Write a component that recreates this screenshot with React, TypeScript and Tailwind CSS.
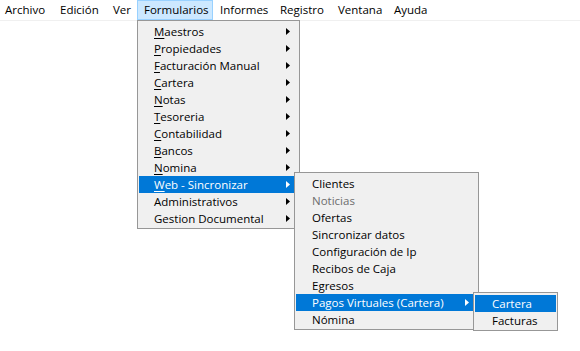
import React from 'react';

type Item = { label: string; mn?: boolean; sub?: boolean; active?: boolean; disabled?: boolean };

const barItems = [
    { label: 'Archivo', w: 'w-[54px]', pl: 'pl-[5px]' },
    { label: 'Edición', w: 'w-[53px]', pl: 'pl-[6px]' },
    { label: 'Ver', w: 'w-[30px]', pl: 'pl-[6px]' },
    { label: 'Formularios', w: 'w-[76px]', pl: 'pl-[6px]', open: true },
    { label: 'Informes', w: 'w-[61px]', pl: 'pl-[7px]' },
    { label: 'Registro', w: 'w-[58px]', pl: 'pl-[6px]' },
    { label: 'Ventana', w: 'w-[56px]', pl: 'pl-[6px]' },
    { label: 'Ayuda', w: 'w-[50px]', pl: 'pl-[6px]' },
];

const mainMenu: Item[] = [
    { label: 'Maestros', mn: true, sub: true },
    { label: 'Propiedades', mn: true, sub: true },
    { label: 'Facturación Manual', mn: true, sub: true },
    { label: 'Cartera', mn: true, sub: true },
    { label: 'Notas', mn: true, sub: true },
    { label: 'Tesoreria', mn: true, sub: true },
    { label: 'Contabilidad', mn: true, sub: true },
    { label: 'Bancos', mn: true, sub: true },
    { label: 'Nomina', mn: true, sub: true },
    { label: 'Web - Sincronizar', mn: true, sub: true, active: true },
    { label: 'Administrativos', sub: true },
    { label: 'Gestion Documental', sub: true },
];

const webMenu: Item[] = [
    { label: 'Clientes' },
    { label: 'Noticias', disabled: true },
    { label: 'Ofertas' },
    { label: 'Sincronizar datos' },
    { label: 'Configuración de Ip' },
    { label: 'Recibos de Caja' },
    { label: 'Egresos' },
    { label: 'Pagos Virtuales (Cartera)', sub: true, active: true },
    { label: 'Nómina' },
];

const pagosMenu: Item[] = [
    { label: 'Cartera', active: true },
    { label: 'Facturas' },
];

function Arrow({ white }: { white?: boolean }) {
    return (
        <svg width="4" height="7" viewBox="0 0 4 7" className="shrink-0">
            <polygon points="0,0 4,3.5 0,7" fill={white ? '#ffffff' : '#000000'} />
        </svg>
    );
}

function MenuRow({ item, textPl }: { item: Item; textPl: string }) {
    const color = item.active ? 'bg-[#0078d7] text-white' : item.disabled ? 'text-[#6d6d6d]' : 'text-black';
    return (
        <div className={`flex items-center h-[17px] pr-[8px] ${textPl} ${color}`}>
            <span className="flex-1 whitespace-nowrap leading-none">
                {item.mn ? (
                    <>
                        <span className="underline underline-offset-[2px]">{item.label[0]}</span>
                        {item.label.slice(1)}
                    </>
                ) : (
                    item.label
                )}
            </span>
            {item.sub && <Arrow white={item.active} />}
        </div>
    );
}

function Menu({ items, className, textPl }: { items: Item[]; className: string; textPl: string }) {
    return (
        <div className={`absolute bg-[#f0f0f0] border border-[#979797] px-[1px] pt-[2px] pb-[1px] ${className}`}>
            {items.map(it => (
                <MenuRow key={it.label} item={it} textPl={textPl} />
            ))}
        </div>
    );
}

export default function App() {
    return (
        <div
            className="relative w-[580px] h-[351px] bg-white overflow-hidden text-[11.5px] text-black"
            style={{ fontFamily: '"Segoe UI", "Open Sans", "Noto Sans", sans-serif' }}
        >
            {/* Menu bar */}
            <div className="flex h-[20px] border-b border-[#f0f0f0] box-content">
                {barItems.map(b => (
                    <div
                        key={b.label}
                        className={`flex items-center h-[20px] ${b.w} ${b.pl} ${b.open ? 'bg-[#cce8ff] border border-[#99d1ff] pl-[5px]' : ''}`}
                    >
                        <span className="whitespace-nowrap leading-none">{b.label}</span>
                    </div>
                ))}
            </div>

            {/* Formularios dropdown */}
            <Menu items={mainMenu} className="left-[137px] top-[20px] w-[163px]" textPl="pl-[15px]" />

            {/* Web - Sincronizar submenu */}
            <Menu items={webMenu} className="left-[294px] top-[172px] w-[185px]" textPl="pl-[16px]" />

            {/* Pagos Virtuales submenu */}
            <Menu items={pagosMenu} className="left-[473px] top-[292px] w-[85px]" textPl="pl-[17px]" />
        </div>
    );
}
